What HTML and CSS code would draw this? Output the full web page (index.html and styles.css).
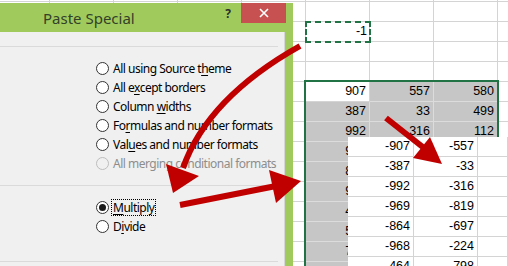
FILE: index.html
```html
<!DOCTYPE html>
<html>
<head>
<meta charset="utf-8">
<link rel="stylesheet" href="styles.css">
</head>
<body>
<div class="stage">
  <div class="sheet">
    <div class="cell neg-one"><span>-1</span></div>
    <div class="block">
      <div class="c active">907</div><div class="c">557</div><div class="c">580</div>
      <div class="c">387</div><div class="c">33</div><div class="c">499</div>
      <div class="c">992</div><div class="c">316</div><div class="c">112</div>
      <div class="c">969</div><div class="c">819</div><div class="c">431</div>
      <div class="c">864</div><div class="c">697</div><div class="c">205</div>
      <div class="c">968</div><div class="c">224</div><div class="c">376</div>
      <div class="c">464</div><div class="c">798</div><div class="c">650</div>
      <div class="c">512</div><div class="c">143</div><div class="c">287</div>
      <div class="c">733</div><div class="c">618</div><div class="c">904</div>
      <div class="c">265</div><div class="c">841</div><div class="c">159</div>
    </div>
  </div>

  <div class="pasted">
    <div class="p">-907</div><div class="p">-557</div><div class="p"></div>
    <div class="p">-387</div><div class="p">-33</div><div class="p"></div>
    <div class="p">-992</div><div class="p">-316</div><div class="p"></div>
    <div class="p">-969</div><div class="p">-819</div><div class="p"></div>
    <div class="p">-864</div><div class="p">-697</div><div class="p"></div>
    <div class="p">-968</div><div class="p">-224</div><div class="p"></div>
    <div class="p">-464</div><div class="p">-798</div><div class="p"></div>
  </div>

  <div class="dialog">
    <div class="titlebar">
      <span class="title">Paste Special</span>
      <span class="help">?</span>
      <span class="close"><svg width="10" height="10" viewBox="0 0 10 10"><path d="M1 1L9 9M9 1L1 9" stroke="#fff" stroke-width="1.6"/></svg></span>
    </div>
    <div class="body">
      <div class="sep first"></div>
      <div class="group">
        <label class="opt"><span class="radio"></span><span class="txt">All using Source t<u>h</u>eme</span></label>
        <label class="opt"><span class="radio"></span><span class="txt">All e<u>x</u>cept borders</span></label>
        <label class="opt"><span class="radio"></span><span class="txt">Column <u>w</u>idths</span></label>
        <label class="opt"><span class="radio"></span><span class="txt">Fo<u>r</u>mulas and number formats</span></label>
        <label class="opt"><span class="radio"></span><span class="txt">Val<u>u</u>es and number formats</span></label>
        <label class="opt disabled"><span class="radio"></span><span class="txt">All merging conditional formats</span></label>
      </div>
      <div class="sep"></div>
      <div class="group ops">
        <label class="opt"><span class="radio on"></span><span class="txt focus"><u>M</u>ultiply</span></label>
        <label class="opt"><span class="radio"></span><span class="txt">D<u>i</u>vide</span></label>
      </div>
      <div class="sep last"></div>
    </div>
  </div>

  <svg class="arrows" width="508" height="266" viewBox="0 0 508 266">
    <g fill="none" stroke="#c00000" stroke-width="6">
      <path d="M300 46 C250 74 202 114 183 168"/>
      <path d="M180 205 L276 186"/>
      <path d="M386 118 L424 148"/>
    </g>
    <g fill="#c00000">
      <polygon points="173,193 166,164 199,176"/>
      <polygon points="301,181 269,170 276,203"/>
      <polygon points="442,164 430,137 413,158"/>
    </g>
  </svg>
</div>
</body>
</html>
```

FILE: styles.css
```css
html, body {
  margin: 0;
  padding: 0;
  background: #fff;
}

.stage {
  position: relative;
  width: 508px;
  height: 266px;
  overflow: hidden;
  background: #fff;
}

/* ---------- spreadsheet (base layer) ---------- */
.sheet {
  display: grid;
  grid-template-columns: repeat(9, 64px);
  grid-template-rows: repeat(18, 20px);
  margin: -18px 0 0 -14px;
  width: 576px;
  background-image:
    linear-gradient(to right, transparent 63px, #d4d4d4 63px),
    linear-gradient(to bottom, transparent 19px, #d4d4d4 19px);
  background-size: 64px 100%, 100% 20px;
  font-family: "Liberation Sans", Arial, sans-serif;
  font-size: 12.5px;
  color: #000;
}

.cell {
  position: relative;
  grid-column: 6;
  grid-row: 3;
  display: flex;
  justify-content: flex-end;
  align-items: flex-end;
  padding: 0 3px 5px 0;
  line-height: 1;
}

.neg-one::after {
  content: "";
  position: absolute;
  left: -1px;
  top: -1px;
  right: -1px;
  bottom: -1px;
  border: 2px dashed #217346;
}

.block {
  position: relative;
  grid-column: 6 / 9;
  grid-row: 6 / 16;
  display: grid;
  grid-template-columns: repeat(3, 64px);
  grid-auto-rows: 20px;
}

.block::after {
  content: "";
  position: absolute;
  left: -2px;
  top: -2px;
  right: -1px;
  height: 400px;
  border: 2px solid #217346;
  pointer-events: none;
}

.c {
  box-sizing: border-box;
  background: #c6c6c6;
  border-right: 1px solid #dcdcdc;
  border-bottom: 1px solid #dcdcdc;
  display: flex;
  justify-content: flex-end;
  align-items: flex-end;
  padding: 0 3px 4px 0;
  line-height: 1;
}

.c.active {
  background: #fff;
  border-color: #d4d4d4;
}

/* ---------- pasted result picture (overlay) ---------- */
.pasted {
  position: absolute;
  left: 348px;
  top: 137px;
  width: 160px;
  display: grid;
  grid-template-columns: 66px 64px 30px;
  grid-auto-rows: 20px;
  background: #fff;
  font-family: "Liberation Sans", Arial, sans-serif;
  font-size: 12.5px;
  color: #000;
}

.p {
  box-sizing: border-box;
  border-right: 1px solid #d4d4d4;
  border-bottom: 1px solid #d4d4d4;
  display: flex;
  justify-content: flex-end;
  align-items: flex-end;
  padding: 0 3px 4px 0;
  line-height: 1;
}

/* ---------- dialog (overlay) ---------- */
.dialog {
  position: absolute;
  left: 0;
  top: 3px;
  width: 293px;
  height: 263px;
  background: #a0cb5c;
  display: flex;
  flex-direction: column;
  font-family: "Noto Sans", "Open Sans", sans-serif;
}

.titlebar {
  flex: none;
  height: 29px;
  display: flex;
  align-items: flex-start;
}

.title {
  margin: 6px 0 0 43px;
  font-size: 15px;
  line-height: 18px;
  color: #33402a;
}

.help {
  margin: 4px 0 0 auto;
  font-size: 12px;
  font-weight: bold;
  color: #2e2e2e;
  line-height: 14px;
}

.close {
  margin: 0 7px 0 10px;
  width: 45px;
  height: 20px;
  background: #c75050;
  display: flex;
  align-items: center;
  justify-content: center;
}

.body {
  flex: 1 1 auto;
  min-height: 0;
  overflow: hidden;
  margin-right: 8px;
  background: #f0f0f0;
  border-right: 1px solid #d6d6d6;
  display: flex;
  flex-direction: column;
}

.sep {
  flex: none;
  height: 1px;
  width: 278px;
  background: #dadada;
}

.sep.first {
  margin-top: 14px;
}

.sep.last {
  margin-top: 13px;
}

.group {
  flex: none;
  display: flex;
  flex-direction: column;
  margin: 12px 0;
  padding-left: 96px;
}

.opt {
  flex: none;
  height: 19px;
  display: flex;
  align-items: center;
  font-size: 12px;
  color: #000;
}

.radio {
  box-sizing: border-box;
  width: 13px;
  height: 13px;
  border: 1px solid #333;
  border-radius: 50%;
  background: #fff;
  margin-right: 3px;
  display: flex;
  align-items: center;
  justify-content: center;
  flex: none;
}

.radio.on::after {
  content: "";
  width: 7px;
  height: 7px;
  border-radius: 50%;
  background: #1a1a1a;
}

.txt {
  padding: 0 1px;
  line-height: 15px;
  white-space: nowrap;
  letter-spacing: -0.5px;
}

.txt u {
  text-underline-offset: 2px;
}

.txt.focus {
  outline: 1px dotted #000;
}

.disabled {
  color: #8d8d8d;
}

.disabled .radio {
  border-color: #bdbdbd;
  background: #f0f0f0;
}

/* ---------- arrows (overlay) ---------- */
.arrows {
  position: absolute;
  left: 0;
  top: 0;
}
```
